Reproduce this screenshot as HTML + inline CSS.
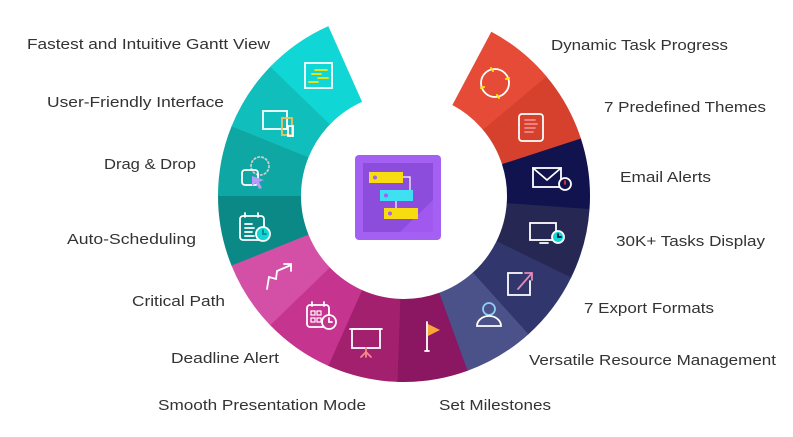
<!DOCTYPE html>
<html><head><meta charset="utf-8"><style>
html,body{margin:0;padding:0;background:#fff;width:793px;height:437px;overflow:hidden}
text{font-family:"Liberation Sans",sans-serif;font-size:15px;fill:#333}
</style></head><body>
<svg width="793" height="437" viewBox="0 0 793 437" xmlns="http://www.w3.org/2000/svg">
<g fill="none" stroke-width="83">
<circle cx="404" cy="196" r="144.5" pathLength="360" stroke-dasharray="22.3 337.7" transform="rotate(-62 404 196)" stroke="#e64b37"/>
<circle cx="404" cy="196" r="144.5" pathLength="360" stroke-dasharray="22.3 337.7" transform="rotate(-40 404 196)" stroke="#d6412e"/>
<circle cx="404" cy="196" r="144.5" pathLength="360" stroke-dasharray="22.3 337.7" transform="rotate(-18 404 196)" stroke="#10134e"/>
<circle cx="404" cy="196" r="144.5" pathLength="360" stroke-dasharray="22.3 337.7" transform="rotate(4 404 196)" stroke="#262853"/>
<circle cx="404" cy="196" r="144.5" pathLength="360" stroke-dasharray="22.3 337.7" transform="rotate(26 404 196)" stroke="#31366c"/>
<circle cx="404" cy="196" r="144.5" pathLength="360" stroke-dasharray="22.3 337.7" transform="rotate(48 404 196)" stroke="#4b5189"/>
<circle cx="404" cy="196" r="144.5" pathLength="360" stroke-dasharray="22.3 337.7" transform="rotate(70 404 196)" stroke="#8b1661"/>
<circle cx="404" cy="196" r="144.5" pathLength="360" stroke-dasharray="22.3 337.7" transform="rotate(92 404 196)" stroke="#a3206f"/>
<circle cx="404" cy="196" r="144.5" pathLength="360" stroke-dasharray="22.3 337.7" transform="rotate(114 404 196)" stroke="#c5348f"/>
<circle cx="404" cy="196" r="144.5" pathLength="360" stroke-dasharray="22.3 337.7" transform="rotate(136 404 196)" stroke="#d450a6"/>
<circle cx="404" cy="196" r="144.5" pathLength="360" stroke-dasharray="22.3 337.7" transform="rotate(158 404 196)" stroke="#0b8986"/>
<circle cx="404" cy="196" r="144.5" pathLength="360" stroke-dasharray="22.3 337.7" transform="rotate(180 404 196)" stroke="#0ea7a3"/>
<circle cx="404" cy="196" r="144.5" pathLength="360" stroke-dasharray="22.3 337.7" transform="rotate(202 404 196)" stroke="#10bebc"/>
<circle cx="404" cy="196" r="144.5" pathLength="360" stroke-dasharray="22 338" transform="rotate(224 404 196)" stroke="#10d6d6"/>
</g>

<!-- center icon -->
<rect x="355" y="155" width="86" height="85" rx="4" fill="#a45ff3"/>
<rect x="363" y="163" width="70" height="69" fill="#8c4cdc"/>
<polygon points="400,232 433,200 433,232" fill="#a058ee"/>
<g stroke="#fff" stroke-width="1.2" fill="none"><path d="M403 177 H410 V190 M396 201 V208"/></g>
<rect x="369" y="172" width="34" height="11" fill="#f8dc12"/><circle cx="375" cy="177.5" r="2" fill="#a45ff3"/>
<rect x="380" y="190" width="33" height="11" fill="#3ee0f2"/><circle cx="386" cy="195.5" r="2" fill="#a45ff3"/>
<rect x="384" y="208" width="34" height="11" fill="#f8dc12"/><circle cx="390" cy="213.5" r="2" fill="#a45ff3"/>

<!-- icons -->
<g fill="none" stroke="#fff" stroke-width="1.8" stroke-linecap="round">
<!-- dynamic -->
<g transform="translate(495,83)"><circle r="14"/><g stroke="#ffe600" stroke-width="2"><path d="M-4 -15 l2 3 M14 -5 l-3 1 M4 15 l-2 -3 M-14 5 l3 -1"/></g></g>
<!-- themes -->
<g transform="translate(531,127)"><rect x="-12" y="-13" width="24" height="27" rx="3"/><g stroke="#f28a8a"><path d="M-6 -7h10M-6 -3h12M-6 1h10M-6 5h8"/></g></g>
<!-- email -->
<g transform="translate(548,178)"><rect x="-15" y="-10" width="28" height="19"/><path d="M-15 -10 L-1 2 L13 -10"/><circle cx="17" cy="6" r="6" fill="#10134e"/><path d="M17 3v3" stroke="#e33"/></g>
<!-- 30k -->
<g transform="translate(544,233)"><rect x="-14" y="-10" width="26" height="17"/><path d="M-4 10h8"/><circle cx="14" cy="4" r="6" fill="#10d6d6" stroke="#fff"/><path d="M14 1v3h3" stroke="#10134e"/></g>
<!-- export -->
<g transform="translate(520,283)"><path d="M2 -10 H-12 V12 H10 V-2"/><path d="M-2 6 L12 -10 M5 -10 H12 V-3" stroke="#e48ab8"/></g>
<!-- resource -->
<g transform="translate(489,314)"><circle cx="0" cy="-5" r="6" stroke="#8fcdf5"/><path d="M-12 12 A12 10 0 0 1 12 12 Z"/></g>
<!-- milestone -->
<g transform="translate(430,336)"><path d="M-3 -14 V15 M-5 15h4"/><polygon points="-2,-12 10,-6 -2,0" fill="#f8a53a" stroke="none"/></g>
<!-- presentation -->
<g transform="translate(366,340)"><path d="M-16 -11h32"/><rect x="-14" y="-11" width="28" height="19"/><path d="M0 8v4 M0 12 l-5 5 M0 12 l5 5 M0 12v5" stroke="#f28a8a"/></g>
<!-- deadline -->
<g transform="translate(321,316)"><rect x="-14" y="-11" width="22" height="22" rx="3"/><path d="M-9 -14v4M3 -14v4"/><g stroke-width="1.2"><rect x="-10" y="-5" width="4" height="4"/><rect x="-4" y="-5" width="4" height="4"/><rect x="-10" y="2" width="4" height="4"/><rect x="-4" y="2" width="4" height="4"/></g><circle cx="8" cy="6" r="7" fill="#c5348f"/><path d="M8 2v4h3"/></g>
<!-- critical -->
<g transform="translate(280,277)"><path d="M-13 12 L-11 0 L-4 2 L-3 -6 L11 -12 M4 -13 H11 V-6"/></g>
<!-- auto -->
<g transform="translate(254,228)"><rect x="-14" y="-12" width="24" height="24" rx="3"/><path d="M-9 -15v4M4 -15v4M-9 -4h7M-9 0h9M-9 4h7M-9 8h9"/><circle cx="9" cy="6" r="7" fill="#10d6d6" stroke="#fff"/><path d="M9 2v4h3" stroke="#0b8986"/></g>
<!-- drag -->
<g transform="translate(256,172)"><circle cx="4" cy="-6" r="9" stroke-dasharray="1.5 2.5" stroke="#ccc"/><rect x="-14" y="-2" width="16" height="15" rx="3"/><polygon points="-4,4 8,8 3,10 6,16 3,17 0,11 -4,14" fill="#b59cf7" stroke="none"/></g>
<!-- user friendly -->
<g transform="translate(278,122)"><rect x="-15" y="-11" width="24" height="18"/><rect x="4" y="-4" width="10" height="17" stroke="#f0c060"/><rect x="10" y="4" width="5" height="10"/></g>
<!-- gantt -->
<g transform="translate(318,75)"><rect x="-13" y="-12" width="27" height="25"/><g stroke="#ffe600"><path d="M-3 -5h12M-6 -1h9M0 3h10M-9 7h9"/></g></g>
</g>

<!-- labels -->
<text x="27" y="49" textLength="243" lengthAdjust="spacingAndGlyphs">Fastest and Intuitive Gantt View</text>
<text x="47" y="107" textLength="177" lengthAdjust="spacingAndGlyphs">User-Friendly Interface</text>
<text x="104" y="169" textLength="92" lengthAdjust="spacingAndGlyphs">Drag &amp; Drop</text>
<text x="67" y="244" textLength="129" lengthAdjust="spacingAndGlyphs">Auto-Scheduling</text>
<text x="132" y="306" textLength="93" lengthAdjust="spacingAndGlyphs">Critical Path</text>
<text x="171" y="363" textLength="108" lengthAdjust="spacingAndGlyphs">Deadline Alert</text>
<text x="158" y="410" textLength="208" lengthAdjust="spacingAndGlyphs">Smooth Presentation Mode</text>
<text x="439" y="410" textLength="112" lengthAdjust="spacingAndGlyphs">Set Milestones</text>
<text x="529" y="365" textLength="247" lengthAdjust="spacingAndGlyphs">Versatile Resource Management</text>
<text x="584" y="313" textLength="130" lengthAdjust="spacingAndGlyphs">7 Export Formats</text>
<text x="616" y="246" textLength="149" lengthAdjust="spacingAndGlyphs">30K+ Tasks Display</text>
<text x="620" y="182" textLength="91" lengthAdjust="spacingAndGlyphs">Email Alerts</text>
<text x="604" y="112" textLength="162" lengthAdjust="spacingAndGlyphs">7 Predefined Themes</text>
<text x="551" y="50" textLength="177" lengthAdjust="spacingAndGlyphs">Dynamic Task Progress</text>
</svg>
</body></html>
